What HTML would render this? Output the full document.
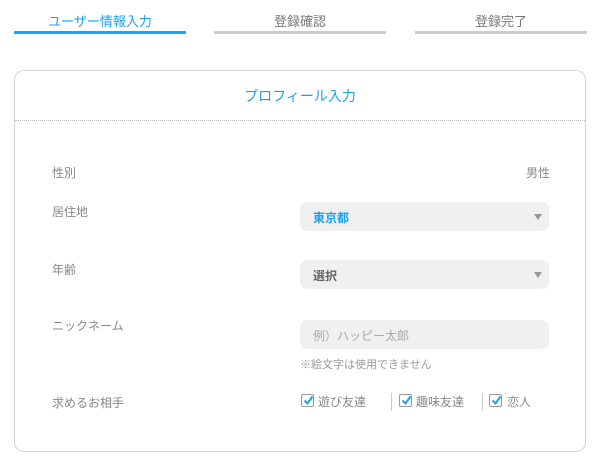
<!DOCTYPE html>
<html><head><meta charset="utf-8"><style>
*{margin:0;padding:0;box-sizing:border-box}
body{width:600px;height:460px;background:#fff;font-family:"Liberation Sans","Noto Sans CJK JP",sans-serif;position:relative;overflow:hidden;color:#777}
.a{position:absolute}
.tab{position:absolute;top:11px;width:172px;text-align:center;font-size:13px;color:#777}
.bar{position:absolute;top:31px;height:3px;width:172px;background:#ccc}
.card{position:absolute;left:14px;top:70px;width:572px;height:382px;border:1px solid #d4d4d4;border-radius:10px}
.lab{position:absolute;left:52px;font-size:12px;color:#888}
.sel{position:absolute;left:300px;width:249px;height:29px;background:#f0f0f0;border-radius:7px;font-size:12px;font-weight:bold;padding:7px 0 0 13px}
.sel:after{content:"";position:absolute;right:7px;top:12px;border-left:4px solid transparent;border-right:4px solid transparent;border-top:6px solid #999}
.cb{position:absolute;top:394px;width:13px;height:13px;border:1px solid #999;border-radius:2px;background:#fff}
.cb svg{position:absolute;left:0;top:-1px}
.ct{position:absolute;top:393px;font-size:12px;color:#888}
.dv{position:absolute;top:393px;width:1px;height:18px;background:#ccc}
</style></head><body>
<div class="tab" style="left:14px;color:#1aa0f0">ユーザー情報入力</div>
<div class="tab" style="left:214px">登録確認</div>
<div class="tab" style="left:415px">登録完了</div>
<div class="bar" style="left:14px;background:#18a4f4"></div>
<div class="bar" style="left:214px"></div>
<div class="bar" style="left:415px"></div>
<div class="card"></div>
<div class="a" style="left:14px;top:86px;width:572px;text-align:center;font-size:14px;color:#1aa0f0">プロフィール入力</div>
<div class="a" style="left:15px;top:120px;width:570px;border-top:1px dotted #bbb"></div>
<div class="lab" style="top:164px">性別</div>
<div class="a" style="left:526px;top:164px;font-size:12px;color:#888">男性</div>
<div class="lab" style="top:203px">居住地</div>
<div class="sel" style="top:202px;color:#1aa0f0">東京都</div>
<div class="lab" style="top:261px">年齢</div>
<div class="sel" style="top:260px;color:#666">選択</div>
<div class="lab" style="top:317px">ニックネーム</div>
<div class="a" style="left:300px;top:320px;width:249px;height:29px;background:#f0f0f0;border-radius:7px;font-size:12px;color:#aaa;padding:7px 0 0 13px">例）ハッピー太郎</div>
<div class="a" style="left:300px;top:356px;font-size:11px;color:#999">※絵文字は使用できません</div>
<div class="lab" style="top:394px">求めるお相手</div>
<div class="cb" style="left:301px"><svg width="13" height="13"><path d="M2.5 6.5l3 3 5-7" stroke="#1aa0f0" stroke-width="2" fill="none"/></svg></div>
<div class="ct" style="left:318px">遊び友達</div>
<div class="dv" style="left:391px"></div>
<div class="cb" style="left:399px"><svg width="13" height="13"><path d="M2.5 6.5l3 3 5-7" stroke="#1aa0f0" stroke-width="2" fill="none"/></svg></div>
<div class="ct" style="left:416px">趣味友達</div>
<div class="dv" style="left:482px"></div>
<div class="cb" style="left:489px"><svg width="13" height="13"><path d="M2.5 6.5l3 3 5-7" stroke="#1aa0f0" stroke-width="2" fill="none"/></svg></div>
<div class="ct" style="left:507px">恋人</div>
</body></html>
